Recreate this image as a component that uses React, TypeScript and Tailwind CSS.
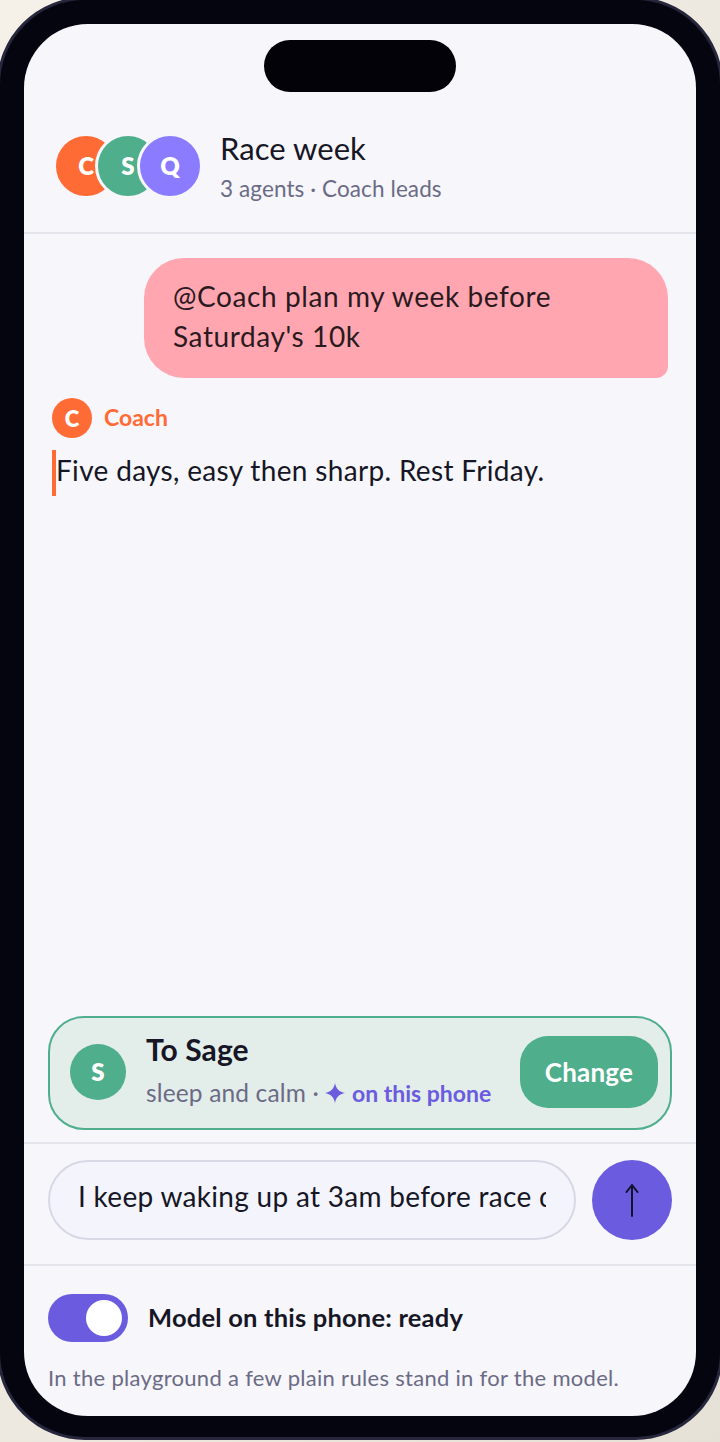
const ui = "font-['Lato','Noto_Sans',sans-serif]";

function Avatar({ letter, className }: { letter: string; className: string }) {
  return (
    <div className={`flex items-center justify-center rounded-full font-extrabold text-white ${className}`}>
      {letter}
    </div>
  );
}

export default function App() {
  return (
    <div className={`h-[1442px] w-[720px] overflow-hidden bg-gradient-to-br from-[#f5f1e9] to-[#e6e1d6] ${ui}`}>
      <div className="relative ml-[-3px] mt-[-3px] h-[1443px] w-[726px] rounded-[88px] border-[3px] border-[#26263c] bg-[#05050f] px-[24px] pb-[21px] pt-[24px]">
        <div className="absolute left-[264px] top-[40px] z-10 h-[52px] w-[192px] rounded-[26px] bg-[#020208]" />
        <div className="flex h-full flex-col overflow-hidden rounded-[64px] bg-[#f6f6fb]">
          <header className="flex h-[210px] shrink-0 items-end border-b-2 border-[#e4e4ec] pb-[33px] pl-[29px]">
            <div className="flex">
              <Avatar letter="C" className="h-[66px] w-[66px] border-[3px] border-[#f6f6fb] bg-[#ff6b35] text-[24px]" />
              <Avatar letter="S" className="ml-[-24px] h-[66px] w-[66px] border-[3px] border-[#f6f6fb] bg-[#4fae8c] text-[24px]" />
              <Avatar letter="Q" className="ml-[-24px] h-[66px] w-[66px] border-[3px] border-[#f6f6fb] bg-[#8b7bff] text-[24px]" />
            </div>
            <div className="ml-[17px] flex h-[66px] flex-col">
              <div className="text-[31px] leading-[30px] tracking-[0.05px] text-[#161625]">Race week</div>
              <div className="mt-[13px] text-[22.5px] leading-[26px] tracking-[0.1px] text-[#6b6b85]">3 agents · Coach leads</div>
            </div>
          </header>

          <main className="flex min-h-0 flex-1 flex-col px-[28px] pt-[24px]">
            <div className="ml-auto h-[120px] w-[524px] rounded-[40px] rounded-br-[12px] bg-[#ffa6b0] px-[29px] py-[18px] text-[28px] leading-[40px] tracking-[0.6px] text-[#2a1a20]">
              @Coach plan my week before Saturday's 10k
            </div>
            <div className="mt-[20px] flex items-center gap-[12px]">
              <Avatar letter="C" className="h-[40px] w-[40px] bg-[#ff6b35] text-[22px]" />
              <span className="pb-[2px] text-[23px] font-bold text-[#ff6b35]">Coach</span>
            </div>
            <div className="mt-[12px] h-[46px] border-l-4 border-[#ff6b35] text-[28px] leading-[40px] tracking-[0.33px] text-[#161625]">
              Five days, easy then sharp. Rest Friday.
            </div>
          </main>

          <div className="px-[24px] pb-[12px]">
            <div className="flex h-[114px] items-center rounded-[36px] border-2 border-[#4fae8c] bg-[#e3edea] pl-[20px] pr-[12px]">
              <Avatar letter="S" className="mb-[2px] h-[56px] w-[56px] shrink-0 bg-[#4fae8c] text-[24px]" />
              <div className="ml-[20px] flex-1">
                <div className="mt-[-7px] text-[30px] font-bold leading-[34px] tracking-[0.1px] text-[#161625]">To Sage</div>
                <div className="mt-[13px] flex items-center text-[24.5px] leading-[28px] tracking-[0.15px] text-[#6b6b85]">
                  sleep and calm ·
                  <svg className="ml-[6px] shrink-0" width="20" height="20" viewBox="0 0 20 20" fill="#6b5bdf">
                    <path d="M10 0C10.9 5.6 14.4 9.1 20 10 14.4 10.9 10.9 14.4 10 20 9.1 14.4 5.6 10.9 0 10 5.6 9.1 9.1 5.6 10 0Z" />
                  </svg>
                  <span className="ml-[7px] text-[23px] font-bold tracking-normal text-[#6b5bdf]">on this phone</span>
                </div>
              </div>
              <button className="mb-[2px] h-[72px] w-[138px] rounded-[28px] bg-[#4fae8c] text-[26px] font-bold tracking-[0.2px] text-white">Change</button>
            </div>
          </div>

          <div className="flex items-center gap-[16px] border-y-2 border-[#e4e4ec] px-[24px] pb-[24px] pt-[16px]">
            <input
              readOnly
              value="I keep waking up at 3am before race day"
              className="h-[80px] min-w-0 flex-1 rounded-full border-2 border-[#d8d8e4] bg-[#f4f4fd] px-[28px] pb-[8px] text-[28px] tracking-[0.3px] text-[#161625] outline-none"
            />
            <button className="flex h-[80px] w-[80px] shrink-0 items-center justify-center rounded-full bg-[#6b5bdf]">
              <svg width="18" height="34" viewBox="0 0 18 34" fill="none" stroke="#12122a" strokeWidth="2" strokeLinecap="round">
                <path d="M9 33V2M3.5 9 9 2l5.5 7" />
              </svg>
            </button>
          </div>

          <div className="px-[24px] pt-[28px]">
            <div className="flex items-center gap-[20px]">
              <div className="flex h-[48px] w-[80px] items-center justify-end rounded-full bg-[#6b5bdf] pr-[6px]">
                <div className="h-[36px] w-[36px] rounded-full bg-white" />
              </div>
              <span className="pb-[2px] text-[25.5px] font-bold tracking-[0.2px] text-[#161625]">Model on this phone: ready</span>
            </div>
            <p className="mt-[21px] text-[22px] leading-[30px] tracking-[0.3px] text-[#6b6b85]">In the playground a few plain rules stand in for the model.</p>
          </div>
          <div className="h-[23px] shrink-0" />
        </div>
      </div>
    </div>
  );
}
